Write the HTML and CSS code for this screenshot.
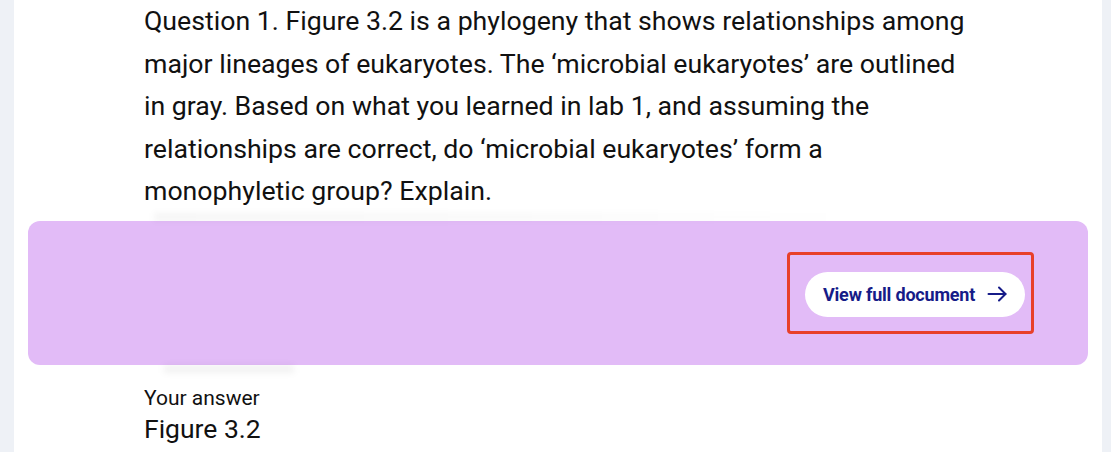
FILE: index.html
```html
<!DOCTYPE html>
<html lang="en">
<head>
    <meta charset="UTF-8">
    <title>Question 1</title>
    <link rel="stylesheet" href="styles.css">
</head>
<body>
    <main class="card">
        <p class="question">Question 1. Figure 3.2 is a phylogeny that shows relationships among major lineages of eukaryotes. The ‘microbial eukaryotes’ are outlined in gray. Based on what you learned in lab 1, and assuming the relationships are correct, do ‘microbial eukaryotes’ form a monophyletic group? Explain.</p>
        <div class="blur-line"></div>
        <section class="paywall">
            <div class="highlight">
                <a class="view-btn" href="#">
                    View full document
                    <svg width="20" height="16" viewBox="0 0 20 16" fill="none" stroke="currentColor" stroke-width="2" stroke-linecap="round" stroke-linejoin="round">
                        <path d="M1.5 8h17"/>
                        <path d="M12 1.5L18.5 8L12 14.5"/>
                    </svg>
                </a>
            </div>
        </section>
        <div class="blur-shadow"></div>
        <div class="answer">
            <div class="answer-label">Your answer</div>
            <div class="answer-text">Figure 3.2</div>
        </div>
    </main>
</body>
</html>
```

FILE: styles.css
```css
body {
    background: #eef1f6;
    margin: 0;
    padding: 0;
    font-family: Roboto, "Liberation Sans", sans-serif;
    color: #111;
    overflow: hidden;
}
.card {
    background: #fff;
    margin-left: 14px;
    width: 1088px;
    height: 452px;
}
.question {
    margin: 0;
    padding-left: 130px;
    width: 830px;
    font-size: 26.7px;
    line-height: 42.5px;
}
.blur-line {
    height: 8px;
    margin-left: 140px;
    width: 700px;
    background: linear-gradient(to right, rgba(0,0,0,0.04), rgba(0,0,0,0.02) 60%, transparent);
    filter: blur(3px);
}
.paywall {
    margin: 0 14px;
    height: 144px;
    background: #e2bbf7;
    border-radius: 12px;
    display: flex;
    align-items: center;
    justify-content: flex-end;
    padding-right: 54px;
}
.highlight {
    border: 3px solid #e8402a;
    border-radius: 4px;
    padding: 17px 6px 14px 15px;
}
.view-btn {
    display: flex;
    align-items: center;
    gap: 12px;
    width: 220px;
    height: 45px;
    box-sizing: border-box;
    padding-left: 18px;
    background: #fff;
    border-radius: 23px;
    color: #161b88;
    font-size: 18px;
    font-weight: 700;
    text-decoration: none;
    letter-spacing: -0.2px;
}
.blur-shadow {
    height: 8px;
    margin-left: 150px;
    width: 130px;
    background: rgba(0,0,0,0.05);
    filter: blur(3px);
}
.answer {
    padding-left: 130px;
    margin-top: 12px;
}
.answer-label {
    font-size: 21px;
    line-height: 26px;
}
.answer-text {
    font-size: 26.5px;
    line-height: 36px;
}
```
